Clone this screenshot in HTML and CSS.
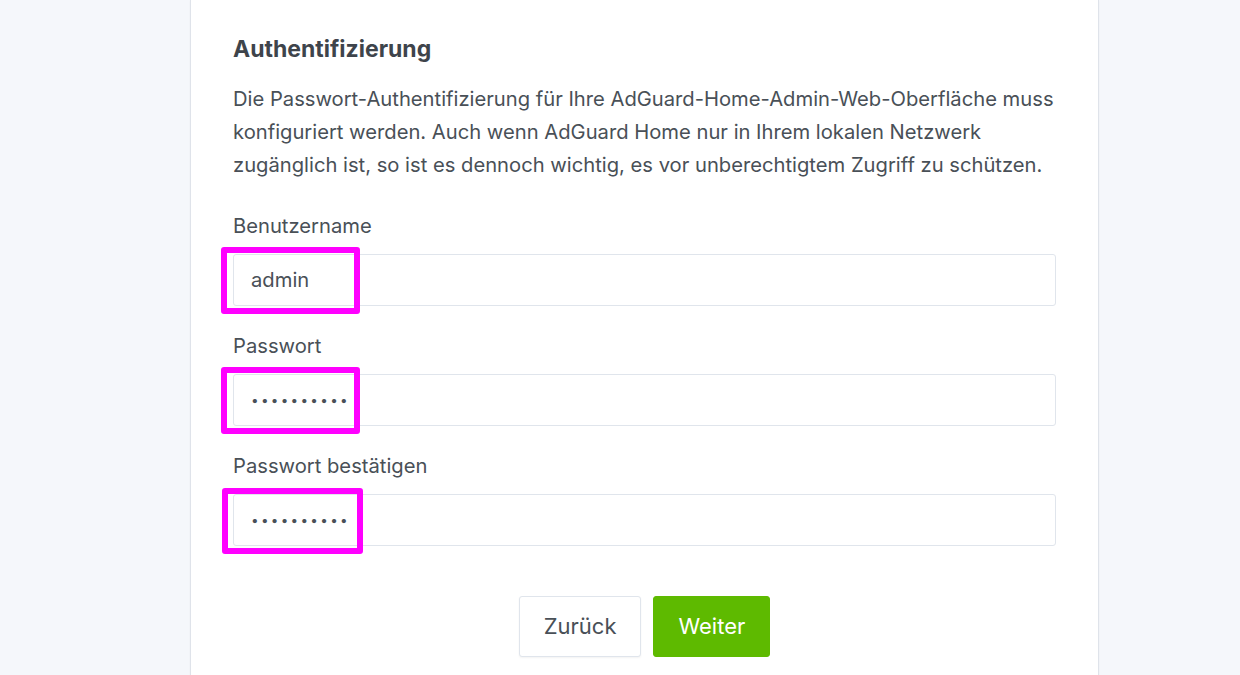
FILE: index.html
```html
<!DOCTYPE html>
<html lang="de">
<head>
<meta charset="utf-8">
<title>AdGuard Home – Einrichtung</title>
<link rel="stylesheet" href="styles.css">
</head>
<body>
<div class="card">
  <h2 class="title">Authentifizierung</h2>
  <p class="desc">Die Passwort-Authentifizierung für Ihre AdGuard-Home-Admin-Web-Oberfläche muss konfiguriert werden. Auch wenn AdGuard Home nur in Ihrem lokalen Netzwerk zugänglich ist, so ist es dennoch wichtig, es vor unberechtigtem Zugriff zu schützen.</p>
  <div class="group">
    <label class="label">Benutzername</label>
    <div class="field">
      <input class="input" type="text" value="admin">
      <span class="mark mark-1"></span>
    </div>
  </div>
  <div class="group">
    <label class="label">Passwort</label>
    <div class="field">
      <input class="input pw" type="password" value="0123456789">
      <span class="mark mark-2"></span>
    </div>
  </div>
  <div class="group">
    <label class="label">Passwort bestätigen</label>
    <div class="field">
      <input class="input pw" type="password" value="0123456789">
      <span class="mark mark-3"></span>
    </div>
  </div>
  <div class="actions">
    <button class="btn btn-secondary" type="button">Zurück</button>
    <button class="btn btn-success" type="button">Weiter</button>
  </div>
</div>
</body>
</html>
```

FILE: styles.css
```css
html, body {
  margin: 0;
  padding: 0;
}
body {
  background: #f5f7fb;
  height: 675px;
  overflow: hidden;
  font-family: Inter, "Liberation Sans", sans-serif;
  color: #495057;
}
.card {
  box-sizing: border-box;
  width: 909px;
  margin-left: 190px;
  min-height: 700px;
  background: #fff;
  border-left: 1px solid #dfe3ea;
  border-right: 1px solid #dfe3ea;
  box-shadow: 0 1px 2px rgba(0, 0, 0, 0.04);
  padding: 34px 42px 0 42px;
}
.title {
  margin: 0;
  font-size: 23px;
  line-height: 30px;
  font-weight: 700;
  color: #3e444b;
}
.desc {
  margin: 17.5px 0 0 0;
  font-size: 20.2px;
  line-height: 33px;
}
.group {
  margin-top: 28.5px;
}
.group + .group {
  margin-top: 23.5px;
}
.label {
  display: block;
  font-size: 20.2px;
  line-height: 33px;
}
.field {
  position: relative;
  margin-top: 11.5px;
}
.input {
  box-sizing: border-box;
  display: block;
  width: 100%;
  height: 52px;
  border: 1px solid #e0e5ec;
  border-radius: 3px;
  padding: 0 17px;
  font-family: inherit;
  font-size: 20.2px;
  color: #495057;
  background: #fff;
  outline: none;
}
.pw {
  letter-spacing: 2.3px;
  font-size: 13.5px;
}
.mark {
  position: absolute;
  box-sizing: border-box;
  border: 6px solid #ff00ff;
  border-radius: 3px;
  pointer-events: none;
}
.mark-1 { left: -12px; top: -7px; width: 139px; height: 67px; }
.mark-2 { left: -12px; top: -7px; width: 139px; height: 67px; }
.mark-3 { left: -11px; top: -6px; width: 141px; height: 66px; }
.actions {
  display: flex;
  justify-content: center;
  align-items: center;
  gap: 12px;
  margin-top: 50px;
}
.btn {
  box-sizing: border-box;
  height: 61px;
  padding: 0 24px;
  border-radius: 3px;
  font-family: inherit;
  font-size: 22px;
  cursor: pointer;
}
.btn-secondary {
  background: #fff;
  border: 1px solid #e0e5ec;
  color: #495057;
  box-shadow: 0 1px 2px rgba(0, 0, 0, 0.05);
}
.btn-success {
  background: #5eba00;
  border: 1px solid #5eba00;
  color: #fff;
}
```
